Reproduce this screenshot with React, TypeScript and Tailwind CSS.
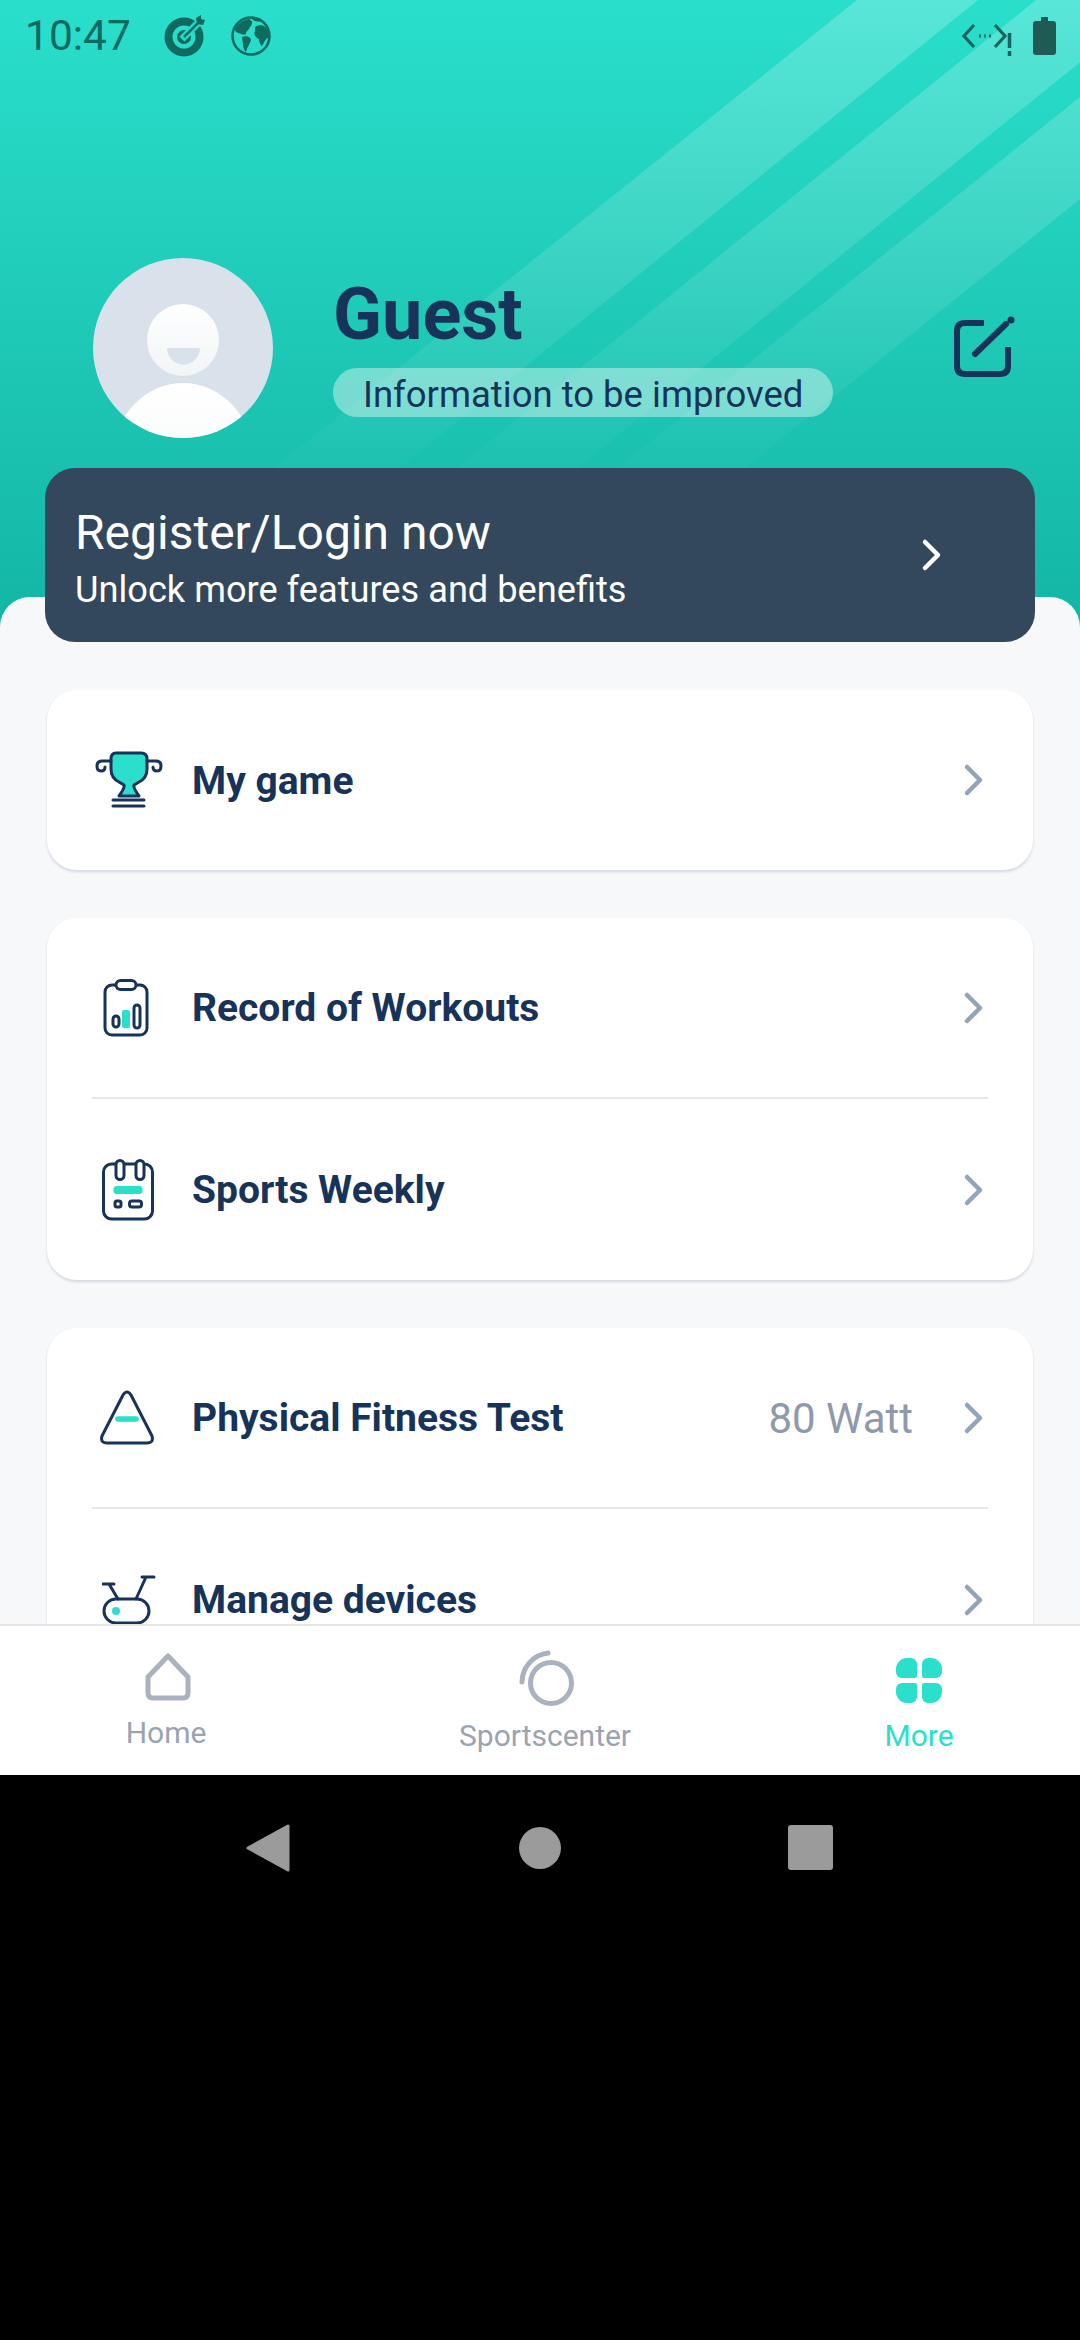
const navy = "#17335a";
const mint = "#2ae0cc";
const statusDark = "#0f6a60";

function Chevron({ className = "" }: { className?: string }) {
  return (
    <svg width="22" height="34" viewBox="0 0 22 34" fill="none" className={className}>
      <path d="M4 4 L17 17 L4 30" stroke="currentColor" strokeWidth="4.5" strokeLinecap="round" strokeLinejoin="round" />
    </svg>
  );
}

function TargetIcon() {
  return (
    <svg width="42" height="42" viewBox="0 0 42 42" fill="none">
      <circle cx="20" cy="22" r="15.5" stroke={statusDark} strokeWidth="8" />
      <circle cx="20" cy="22" r="7" fill={statusDark} />
      <path d="M18 24 L36 6" stroke="#28dcc9" strokeWidth="7" />
      <path d="M20 22 L35 7" stroke={statusDark} strokeWidth="2.5" />
      <path d="M32 3 L33 9 L39 10 L41 5 L37 4 L37 0Z" fill={statusDark} />
    </svg>
  );
}

function GlobeIcon() {
  return (
    <svg width="42" height="42" viewBox="0 0 42 42" fill={statusDark} className="ml-[24px]">
      <circle cx="21" cy="21" r="18.5" fill="none" stroke={statusDark} strokeWidth="2.5" />
      <path d="M5 14 C8 8 13 5 19 4 C23 6 23 9 20 12 C19 15 16 16 16 19 C14 21 10 18 8 18 C6 17 5 16 5 14Z" />
      <path d="M12 22 C16 20 21 22 21 25 C20 29 17 32 16 37 C13 35 13 29 12 22Z" />
      <path d="M25 12 C29 9 34 9 37 14 C40 18 39 22 38 23 C35 24 34 28 32 31 C30 30 29 26 29 24 C26 23 23 19 25 16Z" />
      <path d="M22 4 C25 3 29 4 31 6 C28 7 25 7 22 4Z" />
    </svg>
  );
}

function TrophyIcon() {
  return (
    <svg width="68" height="58" viewBox="0 0 68 58" fill="none" stroke={navy} strokeWidth="3" strokeLinecap="round" strokeLinejoin="round">
      <path d="M21 2 H46 Q52 2 52 8 V18 Q52 27 44 31 L39 34 Q38 37 44 45 H24 Q30 37 29 34 L24 31 Q16 27 16 18 V8 Q16 2 21 2 Z" fill={mint} />
      <path d="M16 10 H7 Q2 10 2 15 Q2 20 6 20 Q10 20 10 16" />
      <path d="M52 10 H61 Q66 10 66 15 Q66 20 62 20 Q58 20 58 16" />
      <path d="M18 49 H49 M18 55 H49" />
    </svg>
  );
}

function ClipboardIcon() {
  return (
    <svg className="-ml-[6px]" width="46" height="58" viewBox="0 0 46 58" fill="none" stroke={navy} strokeWidth="3">
      <rect x="2" y="6" width="42" height="50" rx="7" />
      <rect x="13" y="1.5" width="20" height="9" rx="4.5" fill="#fff" />
      <rect x="10" y="37" width="6" height="11" rx="3" />
      <rect x="19" y="31" width="8" height="18" rx="2" fill={mint} stroke="none" />
      <rect x="31" y="26" width="6" height="23" rx="3" />
    </svg>
  );
}

function CalendarIcon() {
  return (
    <svg className="-ml-[2px]" width="52" height="62" viewBox="0 0 52 62" fill="none" stroke={navy} strokeWidth="3">
      <rect x="1.5" y="5" width="49" height="55" rx="8" />
      <rect x="14" y="1.5" width="8" height="19" rx="4" fill="#fff" />
      <rect x="34" y="1.5" width="8" height="19" rx="4" fill="#fff" />
      <rect x="11.5" y="27" width="29" height="8" rx="3" fill={mint} stroke="none" />
      <rect x="13" y="42" width="6" height="6" rx="2" />
      <rect x="27.5" y="42" width="12" height="6" rx="2.5" />
    </svg>
  );
}

function FlaskIcon() {
  return (
    <svg className="-ml-[4px]" width="56" height="56" viewBox="0 0 56 56" fill="none" stroke={navy} strokeWidth="3" strokeLinejoin="round">
      <path d="M24 5 Q28 -1 32 5 L53 46 Q55 53 48 53 H8 Q1 53 3 46 Z" />
      <path d="M19 29 H37" stroke={mint} strokeWidth="5.5" strokeLinecap="round" />
    </svg>
  );
}

function BikeIcon() {
  return (
    <svg className="ml-[2px]" width="56" height="50" viewBox="0 0 56 50" fill="none" stroke={navy} strokeWidth="3" strokeLinecap="round">
      <rect x="2" y="24" width="45" height="24" rx="12" />
      <path d="M1 9 H12 M7 9 L16 24 M34 24 L44 2 M40 2 H52" />
      <circle cx="14" cy="36" r="4" fill={mint} stroke="none" />
    </svg>
  );
}

function Row({ icon, label, right, divider, height = "h-[181px]" }: { icon: React.ReactNode; label: string; right?: string; divider?: boolean; height?: string }) {
  return (
    <div className={"mx-[45px] flex items-center " + height + (divider ? " border-b-2 border-[#e2e8f0]" : "")}>
      <div className="w-[109px] flex justify-center pr-[18px] -ml-[9px] shrink-0">{icon}</div>
      <span className="text-[39px] font-bold pt-[2px]" style={{ color: navy }}>{label}</span>
      <div className="ml-auto flex items-center text-[#93a3b8]">
        {right && <span className="text-[42px] text-[#8e99ac] mr-[50px] pt-[2px]">{right}</span>}
        <Chevron className="mr-[3px]" />
      </div>
    </div>
  );
}

function Card({ children }: { children: React.ReactNode }) {
  return (
    <div className="mx-[47px] rounded-[30px] bg-white shadow-[0_2px_3px_rgba(23,51,90,0.16)]">
      {children}
    </div>
  );
}

function TabItem({ icon, label, color, className = "" }: { icon: React.ReactNode; label: string; color: string; className?: string }) {
  return (
    <div className={"flex flex-col items-center w-[240px] " + className}>
      <div className="h-[56px] flex items-center justify-center">{icon}</div>
      <span className={"text-[30px] leading-[36px] mt-[10px] " + color}>{label}</span>
    </div>
  );
}

export default function App() {
  return (
    <div className="w-[1080px] h-[2340px] bg-black flex flex-col overflow-hidden font-['Roboto',sans-serif]">
      <div className="h-[1624px] overflow-hidden bg-[#f7f8fa]">
        {/* header */}
        <div className="relative h-[642px] bg-gradient-to-b from-[#29dfcc] to-[#13b5a3]">
          <svg className="absolute inset-0" width="1080" height="642" viewBox="0 0 1080 642" fill="none">
            <defs>
              <linearGradient id="fade" gradientUnits="userSpaceOnUse" x1="0" y1="0" x2="0" y2="500">
                <stop offset="0" stopColor="#fff" stopOpacity="0.22" />
                <stop offset="0.5" stopColor="#fff" stopOpacity="0.12" />
                <stop offset="1" stopColor="#fff" stopOpacity="0" />
              </linearGradient>
            </defs>
            <path d="M857 0 H978 L385 480 H259 Z" fill="url(#fade)" />
            <path d="M1036 0 H1157 L563 480 H442 Z" fill="url(#fade)" />
            <path d="M1201 0 H1328 L730 480 H603 Z" fill="url(#fade)" />
          </svg>

          <div className="relative h-[72px] flex items-center pl-[25px] pr-[24px]">
            <span className="text-[42.5px] w-[139px]" style={{ color: statusDark }}>10:47</span>
            <TargetIcon />
            <GlobeIcon />
            <svg className="ml-auto mt-[6px]" width="50" height="36" viewBox="0 0 50 36" fill="none" stroke="#17655d" strokeWidth="3.2">
              <path d="M12 4 L2 15 L12 26 M33 4 L43 15 L33 26" />
              <path d="M17 15 H19 M22 15 H24 M27 15 H29" strokeWidth="3" />
              <path d="M47.5 12 V27 M47.5 30 V35" strokeWidth="3.5" />
            </svg>
            <svg className="ml-[21px]" width="23" height="38" viewBox="0 0 23 38" fill="#1f5a55">
              <path d="M8 0 H15 V4 H20 Q23 4 23 7 V35 Q23 38 20 38 H3 Q0 38 0 35 V7 Q0 4 3 4 H8 Z" />
            </svg>
          </div>

          <div className="relative flex items-center pl-[93px] pr-[64px] mt-[186px] h-[180px]">
            <svg width="180" height="180" viewBox="0 0 180 180">
              <defs>
                <clipPath id="avatar"><circle cx="90" cy="90" r="90" /></clipPath>
                <linearGradient id="skin" x1="0" y1="0" x2="0" y2="1">
                  <stop offset="0" stopColor="#ffffff" />
                  <stop offset="1" stopColor="#f1f5f7" />
                </linearGradient>
              </defs>
              <g clipPath="url(#avatar)">
                <rect width="180" height="180" fill="#d9e2ea" />
                <circle cx="90" cy="82" r="36" fill="url(#skin)" />
                <path d="M74 90 H107 A16.5 16.5 0 0 1 74 90 Z" fill="#d9e2ea" />
                <ellipse cx="90" cy="200" rx="70" ry="75" fill="url(#skin)" />
              </g>
            </svg>
            <div className="ml-[60px] flex flex-col items-start">
              <span className="text-[72px] leading-[80px] font-bold -mt-[4px]" style={{ color: navy }}>Guest</span>
              <span className="mt-[13px] h-[49px] px-[30px] flex items-center rounded-full bg-white/40 text-[36.5px] pt-[6px]" style={{ color: navy }}>Information to be improved</span>
            </div>
            <svg className="ml-auto" width="66" height="66" viewBox="0 0 66 66" fill="none" stroke={navy} strokeWidth="6">
              <path d="M34 8 H15 Q7 8 7 16 V51 Q7 59 15 59 H50 Q58 59 58 51 V32" />
              <path d="M25 39 L56 9" strokeLinecap="round" />
              <circle cx="61" cy="5" r="3.5" fill={navy} stroke="none" />
            </svg>
          </div>

          <div className="relative mt-[30px] ml-[45px] w-[990px] h-[174px] rounded-[30px] bg-[#33485c] flex items-center justify-between pl-[30px] pr-[92px] text-white z-10">
            <div className="flex flex-col pt-[6px]">
              <span className="text-[48px] leading-[64px]">Register/Login now</span>
              <span className="text-[36.2px] leading-[50px]">Unlock more features and benefits</span>
            </div>
            <Chevron />
          </div>
        </div>

        {/* sheet */}
        <div className="relative -mt-[45px] rounded-t-[30px] bg-[#f7f8fa] pt-[93px] flex flex-col gap-[48px]">
          <Card>
            <Row icon={<TrophyIcon />} label="My game" height="h-[180px]" />
          </Card>
          <Card>
            <Row icon={<ClipboardIcon />} label="Record of Workouts" divider />
            <Row icon={<CalendarIcon />} label="Sports Weekly" />
          </Card>
          <Card>
            <Row icon={<FlaskIcon />} label="Physical Fitness Test" right="80 Watt" divider />
            <Row icon={<BikeIcon />} label="Manage devices" />
          </Card>
        </div>
      </div>

      {/* tab bar */}
      <div className="h-[151px] bg-white border-t-2 border-[#e6e6e6] flex pt-[26px] pl-[46px]">
        <TabItem
          label="Home"
          color="text-[#9aa3b2]"
          className="-mt-[3px]"
          icon={
            <svg className="ml-[4px]" width="46" height="48" viewBox="0 0 46 48" fill="none" stroke="#aab2c0" strokeWidth="5" strokeLinejoin="round">
              <path d="M23 3 L43 24 V40 Q43 45 38 45 H8 Q3 45 3 40 V24 Z" />
            </svg>
          }
        />
        <TabItem
          label="Sportscenter"
          color="text-[#9aa3b2]"
          className="ml-[139px]"
          icon={
            <svg className="ml-[6px]" width="60" height="60" viewBox="0 0 60 60" fill="none" stroke="#aab2c0" strokeLinecap="round">
              <circle cx="33" cy="33" r="20.5" strokeWidth="5" />
              <path d="M4 32 A29.5 29.5 0 0 1 30 3" strokeWidth="5" />
            </svg>
          }
        />
        <TabItem
          label="More"
          color="text-[#2ae0cc]"
          className="ml-[134px]"
          icon={
            <div className="grid grid-cols-2 gap-[5px] w-[46px] h-[45px]">
              <div className="rounded-tl-[11px] rounded-tr-[6px] rounded-bl-[6px] rounded-br-[2px] bg-[#2ae0cc]" />
              <div className="rounded-tr-[11px] rounded-tl-[6px] rounded-br-[6px] rounded-bl-[2px] bg-[#2ae0cc]" />
              <div className="rounded-bl-[11px] rounded-tl-[6px] rounded-br-[6px] rounded-tr-[2px] bg-[#2ae0cc]" />
              <div className="rounded-br-[11px] rounded-tr-[6px] rounded-bl-[6px] rounded-tl-[2px] bg-[#2ae0cc]" />
            </div>
          }
        />
      </div>

      {/* android nav */}
      <div className="h-[145px] flex items-center pl-[246px]">
        <svg width="44" height="48" viewBox="0 0 44 48" fill="#9b9b9b">
          <path d="M42 2 V46 L2 24 Z" stroke="#9b9b9b" strokeWidth="3" strokeLinejoin="round" />
        </svg>
        <div className="ml-[229px] w-[42px] h-[42px] rounded-full bg-[#9b9b9b]" />
        <div className="ml-[227px] w-[45px] h-[45px] rounded-[3px] bg-[#9b9b9b]" />
      </div>
    </div>
  );
}
